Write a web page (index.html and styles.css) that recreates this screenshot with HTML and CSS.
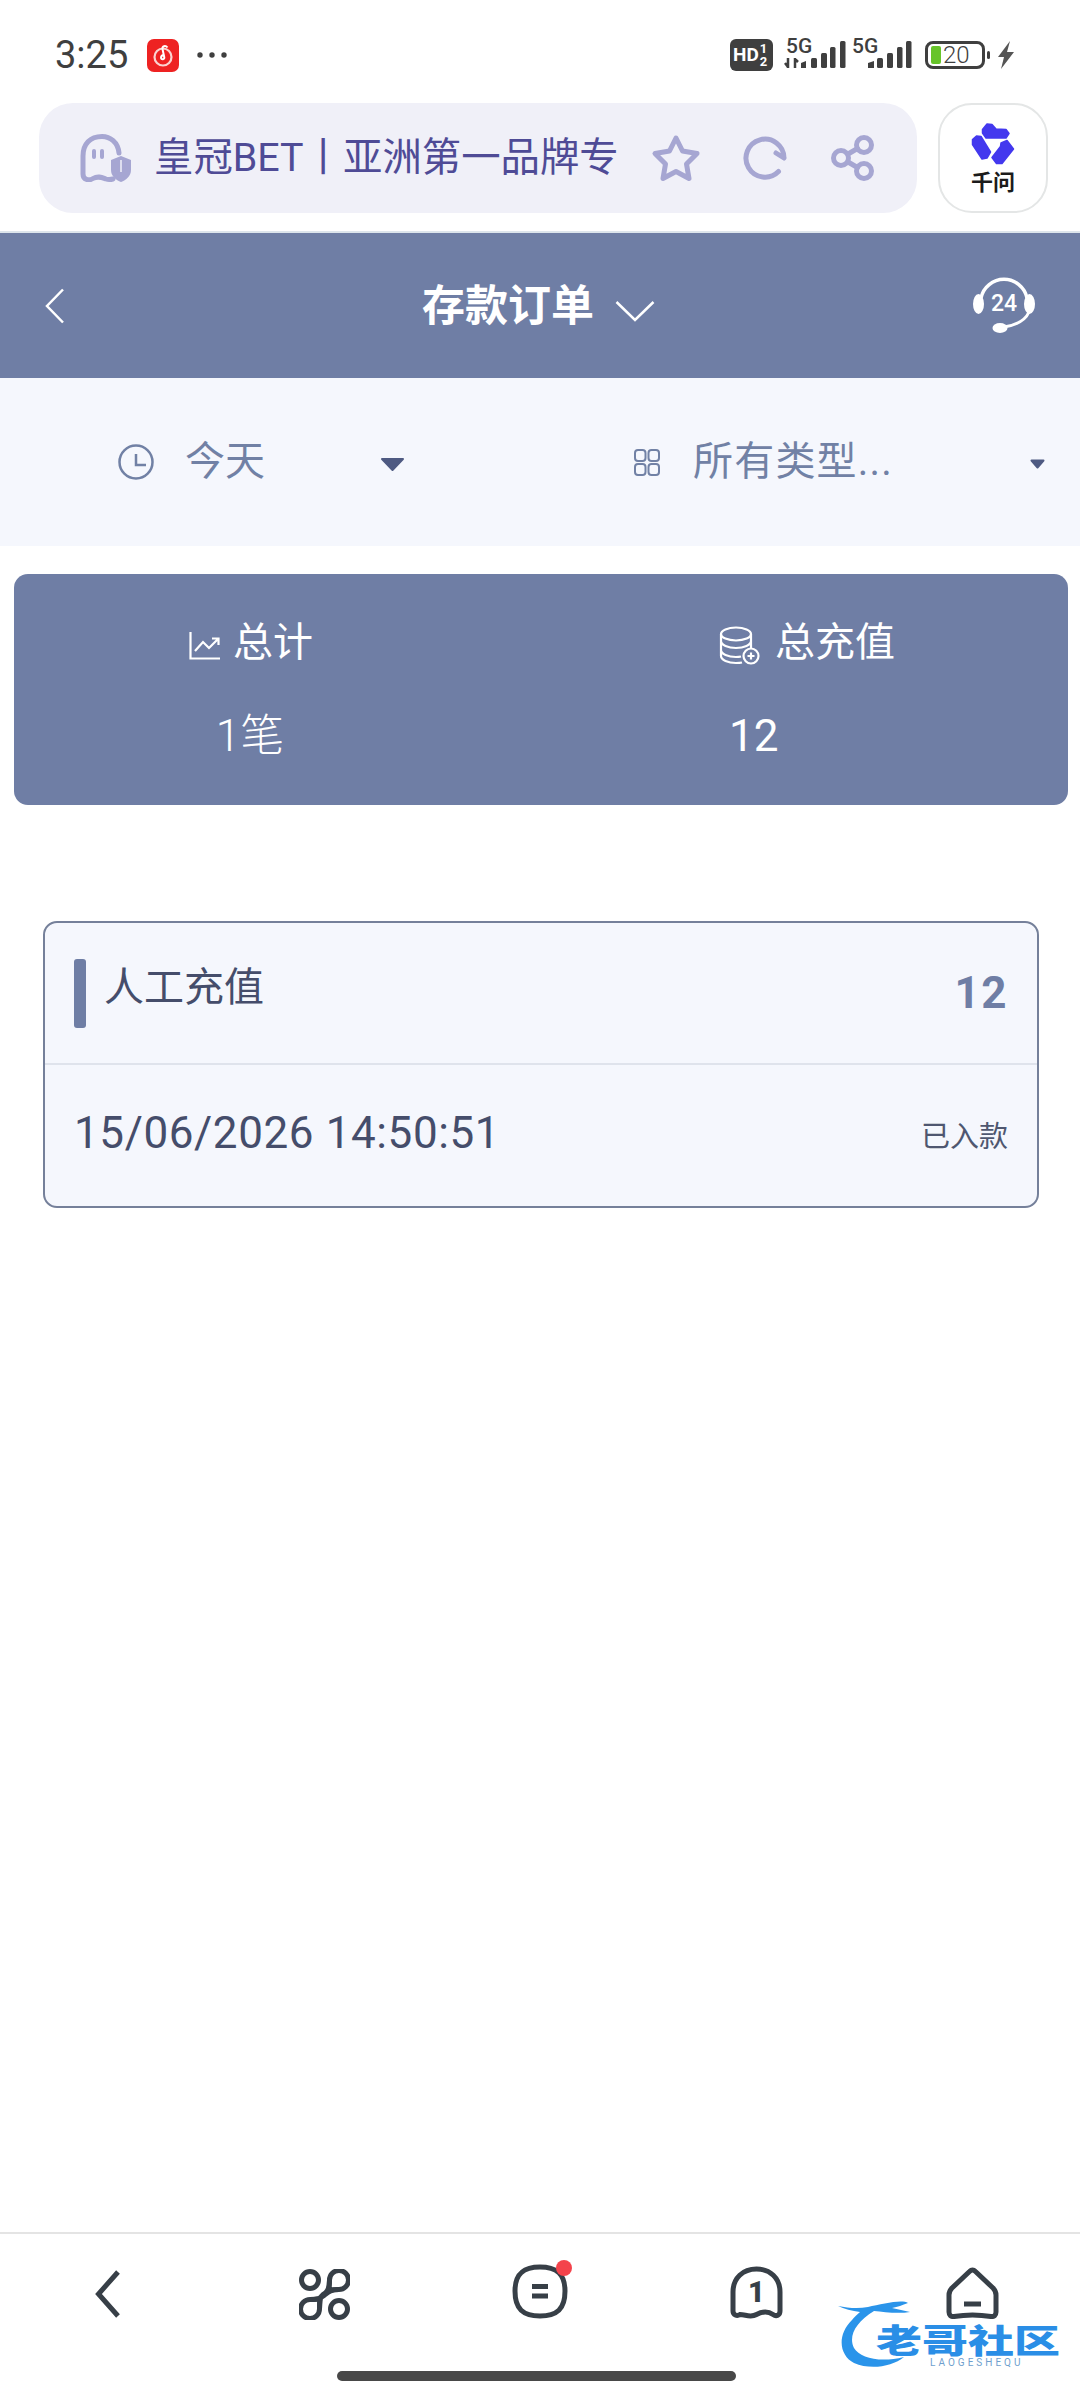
FILE: index.html
```html
<!DOCTYPE html>
<html lang="zh-CN">
<head>
<meta charset="utf-8">
<title>存款订单</title>
<link rel="stylesheet" href="styles.css">
</head>
<body>
<div class="status">
  <span class="clock-text">3:25</span>
  <svg class="app-badge" viewBox="0 0 32 33"><rect width="32" height="33" rx="7" fill="#ee2222"/><circle cx="16" cy="18" r="8.500" fill="none" stroke="#fbd3d0" stroke-width="2.200"/><path d="M20.500 8.500c-2-2.500-5.500-1.500-5 1.500l1.800 8.500c.4 2-2.800 2.500-3.300.4 0-2 1.500-3 3-3" fill="none" stroke="#fff" stroke-width="2"/></svg>
  <svg class="more-dots" viewBox="0 0 30 6"><circle cx="3" cy="3" r="2.700"/><circle cx="15" cy="3" r="2.700"/><circle cx="27" cy="3" r="2.700"/></svg>
  <div class="status-right">
    <div class="hd"><span class="hd-main">HD</span><span class="hd-sim"><span>1</span><span>2</span></span></div>
    <svg class="signal signal-a" viewBox="0 0 62 40"><text x="2" y="18" class="sig-text">5G</text><path d="M4 23v10M1 28l3 4M11 23v10M11 24l3 3" class="sig-arrow"/><path d="M17 28l5-2v7h-5z"/><rect x="27" y="23" width="6" height="10" rx="1.500"/><rect x="37" y="18" width="6" height="15" rx="1.500"/><rect x="46" y="12" width="5.500" height="21" rx="1.500"/><rect x="56" y="6" width="5.500" height="27" rx="1.500"/></svg>
    <svg class="signal signal-b" viewBox="0 0 60 40"><text x="0" y="18" class="sig-text">5G</text><path d="M16 28l6-2v7h-6z"/><rect x="25" y="23" width="6" height="10" rx="1.500"/><rect x="35" y="18" width="6" height="15" rx="1.500"/><rect x="45" y="12" width="5.500" height="21" rx="1.500"/><rect x="54" y="6" width="5.500" height="27" rx="1.500"/></svg>
    <div class="battery"><span class="battery-fill"></span><span class="battery-num">20</span></div>
    <span class="battery-nub"></span>
    <svg class="bolt" viewBox="0 0 18 28"><path d="M13 0 1 16h6l-3 12 13-17h-7z"/></svg>
  </div>
</div>

<div class="browser">
  <div class="pill">
    <svg class="ghost-shield" viewBox="0 0 52 48"><path d="M39 19C38 8 30 2.500 22 2.500 10 2.500 3 10 3 22v18c0 6 6 7 10 4.500 5-3 9-1 13 .5 3 1 5 .5 7 0" fill="none" stroke="#a6a6d2" stroke-width="5" stroke-linecap="round"/><rect x="12" y="15" width="4" height="10" rx="2" fill="#a6a6d2"/><rect x="20" y="15" width="4" height="10" rx="2" fill="#a6a6d2"/><path d="M41 22l10 4v10c0 6-5 10-10 12-5-2-10-6-10-12V26z" fill="#a6a6d2"/><path d="M41 26v12" stroke="#f0f0f8" stroke-width="1.500"/></svg>
    <span class="url">皇冠BET丨亚洲第一品牌专</span>
    <svg class="tool tool-star" viewBox="0 0 50 48"><polygon points="25,4 31.500,17 46,19.500 35.500,30 38,44.500 25,37.500 12,44.500 14.500,30 4,19.500 18.500,17"/></svg>
    <svg class="tool tool-refresh" viewBox="0 0 44 44"><path d="M41 22A19 19 0 1 0 35.500 35.500M41 22l-8-5"/></svg>
    <svg class="tool tool-share" viewBox="0 0 44 46"><circle cx="10" cy="23" r="7.500"/><circle cx="33" cy="10" r="7.500"/><circle cx="33" cy="36" r="7.500"/><path d="M17 19l9.500-5.500M17 27l9.500 5.500"/></svg>
  </div>
  <div class="qianwen">
    <svg class="qw-logo" viewBox="0 0 44 43"><path class="qw-shape" d="M11.500 7.500 16 2l5 .5 4 4.500 10 .5 3 4-3 4.500H15l-3.500-5z"/><path class="qw-shape" d="M1.500 17.500 5.500 14l4.500 .5L19.500 30l-3.500 6-5 1-9.500-14.500z"/><path class="qw-shape" d="M30 21l6-2.500 6.500 8.500L31 41.500h-5.500L21 35.500l8.500-11z"/></svg>
    <span class="qw-name">千问</span>
  </div>
</div>

<header class="topbar">
  <svg class="back" viewBox="0 0 20 36"><path d="M18 1.500 2 18l16 16.500"/></svg>
  <div class="title-wrap">
    <span class="title">存款订单</span>
    <svg class="title-caret" viewBox="0 0 40 22"><path d="M1.500 2 20 20 38.500 2"/></svg>
  </div>
  <svg class="support" viewBox="0 0 64 60"><path d="M9 24A23.500 23.500 0 0 1 55 24" fill="none" stroke="#fff" stroke-width="3.500"/><ellipse cx="6.500" cy="30" rx="5.500" ry="10" fill="#fff"/><ellipse cx="57.500" cy="30" rx="5.500" ry="10" fill="#fff"/><path d="M57 38c-4 9-12 13-25 15" fill="none" stroke="#fff" stroke-width="3"/><ellipse cx="28" cy="54" rx="7.500" ry="5" fill="#fff"/><text x="32" y="37" class="support-num">24</text></svg>
</header>

<div class="filters">
  <div class="filter filter-time">
    <svg class="f-icon f-clock" viewBox="0 0 36 36"><circle cx="18" cy="18" r="16.500"/><path d="M18 10v11h10"/></svg>
    <span class="f-label">今天</span>
    <svg class="caret caret-lg" viewBox="0 0 25 15"><path d="M2 2h21L12.500 13z"/></svg>
  </div>
  <div class="filter filter-type">
    <svg class="f-icon f-grid" viewBox="0 0 26 27"><rect x="1" y="1" width="10.500" height="11" rx="3"/><rect x="14.500" y="1" width="10.500" height="11" rx="3"/><rect x="1" y="15" width="10.500" height="11" rx="3"/><rect x="14.500" y="15" width="10.500" height="11" rx="3"/></svg>
    <span class="f-label f-label-type">所有类型...</span>
    <svg class="caret caret-sm" viewBox="0 0 15 10"><path d="M1.500 1.500h12L7.500 8.500z"/></svg>
  </div>
</div>

<section class="stats">
  <div class="stat">
    <div class="stat-label">
      <svg class="stat-icon stat-trend" viewBox="0 0 31 29"><path d="M1.500 1v26.500H31M6 20l8-9 6 6 9-9M23 7.500h6.500V14"/></svg>
      <span>总计</span>
    </div>
    <div class="stat-value">1笔</div>
  </div>
  <div class="stat stat-right">
    <div class="stat-label">
      <svg class="stat-icon stat-db" viewBox="0 0 41 39"><ellipse cx="17" cy="8" rx="15" ry="6.500"/><path d="M2 8v22c0 4 7 7 15 7 2 0 4 0 6-.5M2 15c0 4 7 7 15 7s15-3 15-7M32 8v14M2 24c0 4 7 7 15 7 2 0 3 0 5-.5"/><circle cx="32" cy="30" r="7.500"/><path d="M32 26.500v7M28.500 30h7"/></svg>
      <span>总充值</span>
    </div>
    <div class="stat-value stat-value-right">12</div>
  </div>
</section>

<article class="order">
  <div class="order-head">
    <span class="order-bar"></span>
    <span class="order-title">人工充值</span>
    <span class="order-amount">12</span>
  </div>
  <div class="order-foot">
    <span class="order-date">15/06/2026 14:50:51</span>
    <span class="order-state">已入款</span>
  </div>
</article>

<nav class="nav">
  <div class="nav-icons">
    <div class="nav-cell"><svg class="nav-icon nav-back" viewBox="0 0 26 48"><path d="M23 2 3.500 24 23 46"/></svg></div>
    <div class="nav-cell"><svg class="nav-icon nav-cmd" viewBox="0 0 51 51"><circle cx="11" cy="11" r="8.500"/><circle cx="40" cy="40" r="8.500"/><path d="M30.500 11A9.500 9.500 0 1 1 40 20.500c-8 0-10 1-10 1zM20.500 40A9.500 9.500 0 1 1 11 30.500c8 0 10-1 10-1z"/><path d="M30.500 11c0 11-4 13-7 15s-3 6-3 14M40 20.500c-9 0-11 3-15 6s-6 4-14 4"/></svg></div>
    <div class="nav-cell"><svg class="nav-icon nav-tabs" viewBox="0 0 60 60"><path d="M28 7c17 0 25 7 25 24 0 18-8 25-25 25S3 49 3 31C3 14 11 7 28 7z"/><path class="nav-eq" d="M20 26.500h16M20 36h16"/><circle class="nav-dot" cx="52" cy="8" r="8"/></svg></div>
    <div class="nav-cell"><svg class="nav-icon nav-ghost" viewBox="0 0 53 53"><path d="M3 26C3 12 13 3 26.500 3S50 12 50 26v19c0 4-3.500 6-7 3.500-5-3.500-10-3.500-16.500 0-6 3.500-11 0-16.500 0C7 50.500 3 49 3 45z"/><text x="26.500" y="36" class="nav-num">1</text></svg></div>
    <div class="nav-cell"><svg class="nav-icon nav-home" viewBox="0 0 53 52"><path d="M26.500 3c1 0 2 .500 3 1.500L47 21c2 2 3 4 3 7v17c0 3-2 5-5 4.500-12-2-25-2-37 0-3 .5-5-1.500-5-4.500V28c0-3 1-5 3-7L23.500 4.500c1-1 2-1.500 3-1.500z"/><path class="nav-eq" d="M18 37h17"/></svg></div>
  </div>
  <div class="home-bar"></div>
  <div class="watermark">
    <svg class="wm-dragon" viewBox="0 0 100 72"><path d="M0 8c10 2 20 3 30 1 14-3 34-8 40-4-6 2-10 4-16 5l18 4c-12 2-26 0-36-1C18 24 10 38 16 50c6 10 26 15 50 9-12 10-34 13-50 6C2 58-2 38 14 22c2-3 5-5 8-8C14 13 6 11 0 8z"/></svg>
    <span class="wm-name">老哥社区</span>
    <span class="wm-sub">LAOGESHEQU</span>
  </div>
</nav>
</body>
</html>
```

FILE: styles.css
```css
* { box-sizing: border-box; }
html, body { margin: 0; padding: 0; }
body {
  width: 1080px;
  height: 2400px;
  display: flex;
  flex-direction: column;
  background: #fff;
  font-family: Roboto, "Noto Sans CJK SC", sans-serif;
  overflow: hidden;
}
svg { display: block; flex: none; }

/* status bar */
.status {
  height: 103px;
  flex: none;
  display: flex;
  align-items: center;
  padding: 7px 65px 0 55px;
  color: #3f3f3f;
}
.clock-text { font-size: 38px; line-height: 40px; width: 92px; }
.app-badge { width: 32px; height: 33px; }
.more-dots { width: 30px; height: 6px; margin-left: 18px; fill: #3f3f3f; }
.status-right { margin-left: auto; display: flex; align-items: center; }
.hd {
  width: 43px;
  height: 32px;
  background: #3f3f3f;
  border-radius: 6px;
  color: #fff;
  display: flex;
  align-items: center;
  padding-left: 3px;
  font-weight: 700;
}
.hd-main { font-size: 19px; line-height: 20px; }
.hd-sim { display: flex; flex-direction: column; font-size: 13px; line-height: 13px; margin-left: 1px; }
.signal { height: 40px; fill: #3f3f3f; }
.signal-a { width: 62px; margin-left: 11px; }
.signal-b { width: 60px; margin-left: 6px; }
.sig-text { font-size: 21px; font-weight: 500; font-family: Roboto, sans-serif; }
.sig-arrow { fill: none; stroke: #3f3f3f; stroke-width: 2.500; }
.battery {
  width: 60px;
  height: 28px;
  margin-left: 13px;
  border: 3px solid #3f3f3f;
  border-radius: 8px;
  display: flex;
  align-items: center;
  padding-left: 3px;
}
.battery-fill { width: 10px; height: 18px; background: #67c42a; border-radius: 2px; }
.battery-num { font-size: 24px; line-height: 22px; margin-left: 2px; font-weight: 300; color: #3f3f3f; }
.battery-nub { width: 3px; height: 8px; background: #3f3f3f; border-radius: 2px; margin-left: 2px; }
.bolt { width: 18px; height: 28px; margin-left: 7px; fill: #555; }

/* browser bar */
.browser {
  height: 128px;
  flex: none;
  display: flex;
  align-items: flex-start;
  padding: 0 32px 0 39px;
}
.pill {
  width: 878px;
  height: 110px;
  background: #f0f0f8;
  border-radius: 34px;
  display: flex;
  align-items: center;
  padding-left: 41px;
}
.ghost-shield { width: 52px; height: 48px; }
.url { margin-left: 22px; font-size: 39.400px; line-height: 50px; color: #4f4b96; width: 464px; white-space: nowrap; }
.tool { fill: none; stroke: #a6a6d2; stroke-width: 5; stroke-linejoin: round; stroke-linecap: round; }
.tool-star { width: 50px; height: 48px; margin-left: 33px; }
.tool-refresh { width: 44px; height: 44px; margin-left: 42px; }
.tool-share { width: 44px; height: 46px; margin-left: 44px; }
.qianwen {
  width: 110px;
  height: 110px;
  margin-left: 21px;
  background: #fff;
  border: 2px solid #e4e6e6;
  border-radius: 34px;
  display: flex;
  flex-direction: column;
  align-items: center;
  padding-top: 17px;
}
.qw-logo { width: 44px; height: 43px; }
.qw-shape { fill: #4338ee; stroke: #4338ee; stroke-width: 1.500; stroke-linejoin: round; }
.qw-name { font-size: 22px; line-height: 28px; font-weight: 700; color: #1b1b1b; margin-top: 4px; }

/* header */
.topbar {
  height: 147px;
  flex: none;
  background: #6f7ea5;
  border-top: 2px solid #dde5ec;
  display: flex;
  align-items: center;
  padding: 0 44px 0 45px;
  color: #fff;
}
.back { width: 20px; height: 36px; fill: none; stroke: #fff; stroke-width: 2.500; }
.title-wrap { display: flex; align-items: center; margin-left: 357px; }
.title { font-size: 43px; line-height: 56px; font-weight: 700; margin-top: 1px; }
.title-caret { width: 40px; height: 22px; margin: 11px 0 0 21px; fill: none; stroke: #fff; stroke-width: 2.500; }
.support { width: 64px; height: 60px; margin: -3px 0 0 auto; }
.support-num { font-size: 23px; font-weight: 500; fill: #fff; text-anchor: middle; font-family: Roboto, sans-serif; }

/* filters */
.filters {
  height: 168px;
  flex: none;
  background: #f5f7fd;
  display: flex;
}
.filter { display: flex; align-items: center; color: #7181a5; }
.filter-time { width: 540px; padding-left: 118px; }
.filter-type { padding-left: 94px; }
.f-icon { fill: none; stroke: #7181a5; stroke-width: 2.500; }
.f-clock { width: 36px; height: 36px; }
.f-grid { width: 26px; height: 27px; stroke-width: 2; }
.f-label { font-size: 40px; line-height: 50px; margin-left: 31px; width: 195px; }
.f-label-type { width: 337px; margin-left: 33px; letter-spacing: 1.200px; }
.caret { fill: #4e5a82; stroke: #4e5a82; stroke-width: 2; stroke-linejoin: round; }
.caret-lg { width: 25px; height: 15px; margin-top: 4px; }
.caret-sm { width: 15px; height: 10px; margin-top: 4px; }

/* totals */
.stats {
  width: 1054px;
  height: 231px;
  flex: none;
  margin: 28px 0 0 14px;
  background: #6f7ea5;
  border-radius: 14px;
  display: grid;
  grid-template-columns: 472px 1fr;
  color: #fff;
}
.stat { display: flex; flex-direction: column; align-items: center; padding-top: 46px; }
.stat-right { align-items: flex-start; padding-left: 233px; }
.stat-label { display: flex; align-items: center; font-size: 40px; line-height: 46px; height: 46px; }
.stat-icon { fill: none; stroke: #fff; stroke-width: 2.200; margin-right: 15px; }
.stat-trend { width: 31px; height: 29px; margin: 5px 13px 0 2px; }
.stat-db { width: 41px; height: 39px; margin-top: 5px; }
.stat-value { font-size: 44px; line-height: 50px; margin-top: 45px; font-weight: 300; }
.stat-value-right { margin-left: 10px; font-weight: 400; }

/* order card */
.order {
  width: 996px;
  height: 287px;
  flex: none;
  margin: 116px 0 0 43px;
  background: #f5f7fd;
  border: 2px solid #75809a;
  border-radius: 14px;
}
.order-head {
  height: 142px;
  border-bottom: 2px solid #dfe3ec;
  display: flex;
  align-items: flex-start;
  padding: 36px 29px 0 29px;
}
.order-bar { width: 12px; height: 69px; background: #6f7ea5; border-radius: 3px; }
.order-title { font-size: 40px; line-height: 50px; color: #454d6b; margin-left: 18px; margin-top: 4px; }
.order-amount { font-size: 44px; line-height: 50px; font-weight: 700; color: #6f7ea5; margin: 9px 0 0 auto; letter-spacing: 1.500px; }
.order-foot {
  display: flex;
  align-items: center;
  justify-content: space-between;
  height: 139px;
  padding: 0 29px 0 29px;
}
.order-date { font-size: 44px; line-height: 50px; color: #454d6b; letter-spacing: .6px; margin-top: -3px; }
.order-state { font-size: 29px; line-height: 36px; color: #4f5770; margin-top: 4px; }

/* bottom nav */
.nav {
  position: relative;
  margin-top: auto;
  height: 168px;
  flex: none;
  border-top: 2px solid #e4e4e4;
}
.nav-icons { display: grid; grid-template-columns: repeat(5, 216px); height: 137px; padding-top: 32px; }
.nav-cell { display: flex; justify-content: center; }
.nav-icon { fill: none; stroke: #373f47; stroke-width: 5; }
.nav-back { width: 26px; height: 48px; margin-top: 4px; }
.nav-cmd { width: 51px; height: 51px; margin-top: 3px; }
.nav-tabs { width: 60px; height: 60px; margin-top: -6px; margin-left: 4px; }
.nav-eq { stroke-width: 5; }
.nav-dot { fill: #f4434b; stroke: none; }
.nav-ghost { width: 53px; height: 53px; }
.nav-num { font-size: 29px; font-weight: 900; fill: #373f47; stroke: none; text-anchor: middle; font-family: Roboto, sans-serif; }
.nav-home { width: 53px; height: 52px; margin-top: 1px; }
.home-bar { width: 399px; height: 10px; margin-left: 337px; background: #484848; border-radius: 5px; }

/* watermark, over the nav */
.watermark { position: absolute; left: 838px; top: 64px; width: 224px; height: 74px; color: #2a90e8; }
.wm-dragon { position: absolute; left: 0; top: 0; width: 100px; height: 72px; fill: #2a94ea; }
.wm-name {
  position: absolute;
  left: 38px;
  top: 23px;
  font-size: 46px;
  line-height: 56px;
  font-weight: 900;
  white-space: nowrap;
  color: #2a8ee6;
  transform: scaleY(.72);
  transform-origin: left top;
}
.wm-sub { position: absolute; left: 92px; top: 59px; font-size: 10px; line-height: 12px; letter-spacing: 3px; color: #6f9fce; }
```
